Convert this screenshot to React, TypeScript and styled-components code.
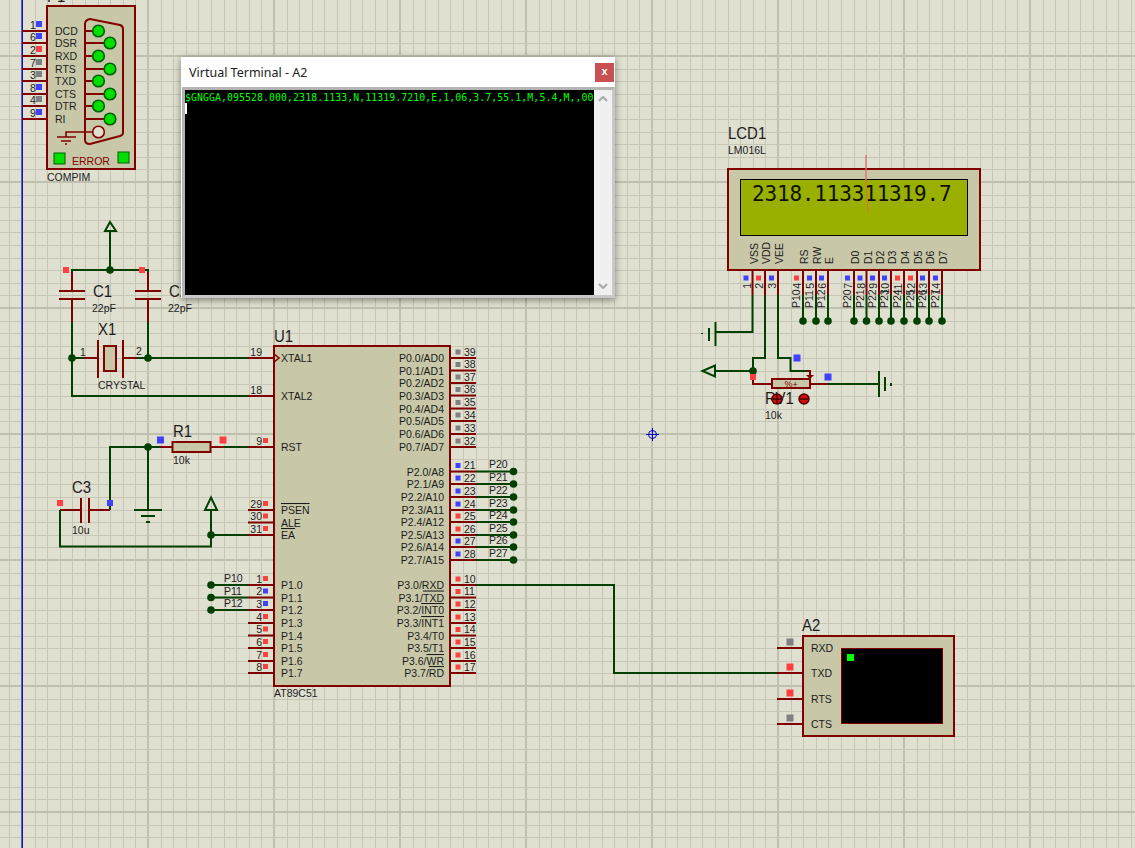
import styled, { createGlobalStyle } from "styled-components";

const RED = "#800000";
const WIRE = "#004000";
const BODY = "#c8c8a8";
const SQ: Record<string, string> = { r: "#ff4040", b: "#4040ff", g: "#808080" };

const GlobalStyle = createGlobalStyle`
  html, body {
    margin: 0;
    padding: 0;
    overflow: hidden;
    background: #e0e0d0;
  }
`;

const Canvas = styled.div`
  position: relative;
  width: 1135px;
  height: 848px;
  overflow: hidden;
  background: #e0e0d0;
`;

const Sheet = styled.svg`
  display: block;
`;

const Label = styled.text<{ $size?: number; $color?: string }>`
  font-family: "Liberation Sans", Arial, sans-serif;
  font-size: ${({ $size }) => $size ?? 10.5}px;
  fill: ${({ $color }) => $color ?? "#1c1c1c"};
`;

const LcdChars = styled.text`
  font-family: "DejaVu Sans Mono", monospace;
  font-size: 21px;
  letter-spacing: -0.18px;
  fill: #101000;
`;

const Bar = styled.tspan`
  text-decoration: overline;
`;

const Terminal = styled.div`
  position: absolute;
  left: 181px;
  top: 57px;
  width: 434px;
  height: 241px;
  display: flex;
  flex-direction: column;
  background: #fff;
  box-shadow: 0 2px 7px rgba(0, 0, 0, 0.45);
`;

const TitleBar = styled.div`
  height: 30px;
  display: flex;
  align-items: center;
  justify-content: space-between;
  padding: 0 1px 0 8px;
  font-family: "Noto Sans", "Liberation Sans", sans-serif;
  font-size: 12.5px;
  color: #222;
`;

const CloseButton = styled.div`
  width: 19px;
  height: 19px;
  background: #c75050;
  color: #fff;
  font-family: "Liberation Sans", sans-serif;
  font-weight: 700;
  font-size: 11px;
  line-height: 17px;
  text-align: center;
`;

const TermFrame = styled.div`
  flex: 1;
  display: flex;
  background: #f0f0f0;
  border-top: 3px solid #b4b4b4;
  border-left: 3px solid #b4b4b4;
  border-right: 3px solid #c8c8c8;
  border-bottom: 3px solid #c8c8c8;
  margin-left: 1px;
  min-height: 0;
`;

const Screen = styled.div`
  flex: 1;
  background: #000;
  padding-top: 1px;
  font-family: "DejaVu Sans Mono", monospace;
  font-size: 9.85px;
  letter-spacing: 0.08px;
  line-height: 13px;
  color: #00ff00;
  white-space: nowrap;
  overflow: hidden;
`;

const Caret = styled.div`
  width: 2px;
  height: 11px;
  margin-top: -1px;
  background: #fff;
`;

const ScrollBar = styled.div`
  width: 18px;
  display: flex;
  flex-direction: column;
  justify-content: space-between;
  align-items: center;
  padding: 6px 0;
  box-sizing: border-box;
`;

const grid = (origin: number, max: number) => {
  const out: { at: number; major: boolean }[] = [];
  for (let k = -2; origin + k * 12.6 < max; k++) {
    out.push({ at: Math.round(origin + k * 12.6), major: k % 10 === 0 });
  }
  return out;
};

function Grid() {
  return (
    <g>
      {grid(22, 1135).map(({ at, major }) => (
        <rect key={`x${at}`} x={at - (major ? 1 : 0)} y={0} width={major ? 2 : 1} height={848} fill={major ? "#c0c0b0" : "#c6c6b7"} />
      ))}
      {grid(56, 848).map(({ at, major }) => (
        <rect key={`y${at}`} x={0} y={at - (major ? 1 : 0)} width={1135} height={major ? 2 : 1} fill={major ? "#c0c0b0" : "#c6c6b7"} />
      ))}
    </g>
  );
}

function Sq({ x, y, c, s = 6 }: { x: number; y: number; c: string; s?: number }) {
  return <rect x={x - s / 2} y={y - s / 2} width={s} height={s} fill={SQ[c]} />;
}

function Wire({ d, red }: { d: string; red?: boolean }) {
  return <path d={d} fill="none" stroke={red ? RED : WIRE} strokeWidth={2} />;
}

function Dot({ x, y }: { x: number; y: number }) {
  return <circle cx={x} cy={y} r={3.8} fill={WIRE} />;
}

// part references are drawn tall and narrow in the original
function RefLabel({ x, y, children }: { x: number; y: number; children: string }) {
  return (
    <Label $size={17} transform={`translate(${x} ${y}) scale(0.88 1)`}>
      {children}
    </Label>
  );
}

const compimPins = [
  ["1", "b", "DCD"],
  ["6", "b", "DSR"],
  ["2", "r", "RXD"],
  ["7", "g", "RTS"],
  ["3", "g", "TXD"],
  ["8", "b", "CTS"],
  ["4", "g", "DTR"],
  ["9", "b", "RI"],
];
const compimY = [31, 43, 56, 69, 81, 94, 106, 119];

function Compim() {
  return (
    <g>
      <rect x={47} y={6} width={88} height={163} fill={BODY} stroke={RED} strokeWidth={2} />
      <RefLabel x={47} y={2}>P1</RefLabel>
      {compimPins.map(([num, c, name], i) => {
        const y = compimY[i];
        const ball = i % 2 === 0 ? 98.5 : 110;
        return (
          <g key={num}>
            <path d={`M22 ${y}H47`} stroke={RED} strokeWidth={2} />
            <Label x={30} y={y - 2.5}>{num}</Label>
            <Sq x={39} y={y - 7} c={c} />
            <Label x={55} y={y + 4}>{name}</Label>
            <path d={`M85 ${y}H${ball}`} stroke={RED} strokeWidth={2} />
            <circle cx={ball} cy={y} r={5.8} fill="#00e000" stroke="#006000" strokeWidth={1.6} />
          </g>
        );
      })}
      <path d="M85 24Q85 20 90 19L120 25Q123 26 123 29V133Q123 135 120 136L90 144Q85 144 85 140Z" fill="none" stroke={RED} strokeWidth={2} />
      <path d="M93 132H66V137M57 137H76M61 141H71M65 144H67" fill="none" stroke={RED} strokeWidth={1.6} />
      <circle cx={98.5} cy={132} r={5.8} fill="#e0e0d0" stroke={RED} strokeWidth={1.6} />
      <rect x={54} y={153} width={11} height={11} fill="#00e000" stroke="#006000" />
      <rect x={118} y={152} width={11} height={11} fill="#00e000" stroke="#006000" />
      <Label x={72} y={165} $color={RED}>ERROR</Label>
      <Label x={47} y={181}>COMPIM</Label>
    </g>
  );
}

const lcdPins = [
  { x: 752.5, name: "VSS", num: "1", c: "b" },
  { x: 765, name: "VDD", num: "2", c: "r" },
  { x: 778, name: "VEE", num: "3", c: "b" },
  { x: 803, name: "RS", num: "4", c: "r", net: "P10" },
  { x: 816, name: "RW", num: "5", c: "b", net: "P11" },
  { x: 828, name: "E", num: "6", c: "b", net: "P12" },
  { x: 854, name: "D0", num: "7", c: "b", net: "P20" },
  { x: 866.5, name: "D1", num: "8", c: "b", net: "P21" },
  { x: 879, name: "D2", num: "9", c: "b", net: "P22" },
  { x: 891, name: "D3", num: "10", c: "b", net: "P23" },
  { x: 904, name: "D4", num: "11", c: "r", net: "P24" },
  { x: 917, name: "D5", num: "12", c: "r", net: "P25" },
  { x: 929, name: "D6", num: "13", c: "b", net: "P26" },
  { x: 942, name: "D7", num: "14", c: "b", net: "P27" },
];

function Lcd() {
  return (
    <g>
      <RefLabel x={728} y={139}>LCD1</RefLabel>
      <Label x={728} y={154}>LM016L</Label>
      <rect x={728} y={169} width={252} height={101} fill={BODY} stroke={RED} strokeWidth={2} />
      <rect x={740.5} y={179.5} width={227} height={56} fill="#99b000" stroke="#000" />
      <LcdChars x={752} y={201}>2318.113311319.7</LcdChars>
      {lcdPins.map((p) => (
        <g key={p.name}>
          <Label x={p.x + 5} y={264} transform={`rotate(-90 ${p.x + 5} 264)`}>{p.name}</Label>
          <path d={`M${p.x} 270V295`} stroke={RED} strokeWidth={2} />
          <Sq x={p.x - 6.5} y={278} c={p.c} s={5} />
          {p.net && <path d={`M${p.x} 295V321`} stroke={WIRE} strokeWidth={2} />}
          {p.net && <Dot x={p.x} y={321} />}
          <Label x={p.x - 2} y={283} textAnchor="start" transform={`rotate(-90 ${p.x - 2} 283) translate(${-p.num.length * 5.8} 0)`}>{p.num}</Label>
          {p.net && (
            <Label x={p.x - 3} y={308} transform={`rotate(-90 ${p.x - 3} 308)`}>{p.net}</Label>
          )}
        </g>
      ))}
      <path d="M866 155V182" stroke="#e07070" strokeWidth={1.4} fill="none" />
      <path d="M866 182L868 213" stroke="#d08030" strokeWidth={1.4} fill="none" />

      <Wire d="M752.5 295V332H716" />
      <path d="M715.5 322V346M709 328V341M702 333V334" stroke={WIRE} strokeWidth={2} fill="none" />
      <Wire d="M765 295V358H753V371H716" />
      <path d="M702.5 371L715 365.5V376.5Z" fill="none" stroke={WIRE} strokeWidth={2} />
      <Dot x={753} y={371} />
      <Wire red d="M753 376V384H772" />
      <Sq x={753} y={377} c="r" />
      <Wire d="M778 295V358H790.5V371H807" />
      <Wire red d="M807 371H810V375" />
      <path d="M806 375H814L810 379Z" fill={RED} />
      <Sq x={797} y={358} c="b" s={7} />
      <rect x={772} y={379} width={38} height={9} fill={BODY} stroke={RED} strokeWidth={2} />
      <Label x={791} y={387} $size={9} $color={RED} textAnchor="middle" transform="rotate(180 791 384)">+%</Label>
      <Wire red d="M810 384H828" />
      <Wire d="M828 384H879" />
      <Sq x={828} y={377} c="b" s={7} />
      <path d="M879 371V397M885 377V391M891 383V386" stroke={WIRE} strokeWidth={2} fill="none" />
      <RefLabel x={765} y={404}>RV1</RefLabel>
      <Label x={765} y={419}>10k</Label>
      <circle cx={777} cy={399} r={5} fill="#d01010" stroke="#500000" strokeWidth={1.5} />
      <path d="M773 399H781M777 395V403" stroke="#400000" strokeWidth={1.4} />
      <circle cx={804} cy={399} r={5} fill="#d01010" stroke="#500000" strokeWidth={1.5} />
      <path d="M800 399H808" stroke="#400000" strokeWidth={1.4} />
    </g>
  );
}

function Cap({ x, label }: { x: number; label: string }) {
  return (
    <g>
      <Wire red d={`M${x} 272V291M${x - 13} 291H${x + 13}M${x - 13} 299H${x + 13}M${x} 299V322`} />
      <Wire d={`M${x} 322V358`} />
      <Sq x={x - 6} y={270} c="r" />
      <RefLabel x={x + 21} y={297}>{label}</RefLabel>
      <Label x={x + 20} y={312}>22pF</Label>
    </g>
  );
}

function Passives() {
  return (
    <g>
      <path d="M110 222L116 231H105Z" fill="none" stroke={WIRE} strokeWidth={2} />
      <Wire d="M110 231V270M71 270H149M72 270V272M148 270V272" />
      <Dot x={110} y={270} />
      <Cap x={72} label="C1" />
      <Cap x={148} label="C2" />

      <Wire d="M72 358H84M137 358H248M72 358V396H248" />
      <Wire red d="M84 358H98M98 340V378M123 340V378M123 358H137M248 358H274M248 396H274" />
      <rect x={104} y={346} width={12} height={25} fill={BODY} stroke={RED} strokeWidth={2} />
      <Dot x={72} y={358} />
      <Dot x={148} y={358} />
      <RefLabel x={98} y={335}>X1</RefLabel>
      <Label x={80} y={356}>1</Label>
      <Label x={136} y={355}>2</Label>
      <Label x={98} y={389}>CRYSTAL</Label>

      <Wire d="M110 510V447H160M224 447H248M148 447V510" />
      <Wire red d="M160 447H172M211 447H224M248 447H274" />
      <rect x={172.5} y={442} width={38} height={10} fill={BODY} stroke={RED} strokeWidth={2} />
      <Dot x={148} y={447} />
      <Sq x={160.5} y={440} c="b" s={7} />
      <Sq x={223} y={440} c="r" s={7} />
      <RefLabel x={173} y={437}>R1</RefLabel>
      <Label x={173} y={464}>10k</Label>
      <path d="M134 510H162M141 516H155M146 522H150" stroke={WIRE} strokeWidth={2} fill="none" />

      <Wire red d="M60 510H81M81 498V523M89 498V523M89 510H110" />
      <Wire d="M60 510V546.5H211V510M211 535H248" />
      <path d="M211 497.5L217 510H205Z" fill="none" stroke={WIRE} strokeWidth={2} />
      <Dot x={211} y={535} />
      <Sq x={60} y={503} c="r" />
      <Sq x={110} y={503} c="b" />
      <RefLabel x={72} y={493}>C3</RefLabel>
      <Label x={72} y={534}>10u</Label>
    </g>
  );
}

const leftPins = [
  { y: 358, n: "19", name: "XTAL1" },
  { y: 396, n: "18", name: "XTAL2" },
  { y: 447, n: "9", c: "r", name: "RST" },
  { y: 510, n: "29", c: "r", name: "PSEN", bar: true },
  { y: 522.5, n: "30", c: "r", name: "ALE" },
  { y: 535, n: "31", c: "r", name: "EA", bar: true },
  { y: 585, n: "1", c: "r", name: "P1.0", net: "P10" },
  { y: 597.5, n: "2", c: "b", name: "P1.1", net: "P11" },
  { y: 610, n: "3", c: "b", name: "P1.2", net: "P12" },
  { y: 623, n: "4", c: "r", name: "P1.3" },
  { y: 635.5, n: "5", c: "r", name: "P1.4" },
  { y: 648, n: "6", c: "r", name: "P1.5" },
  { y: 661, n: "7", c: "r", name: "P1.6" },
  { y: 673, n: "8", c: "r", name: "P1.7" },
];

const p0 = ["P0.0/AD0", "P0.1/AD1", "P0.2/AD2", "P0.3/AD3", "P0.4/AD4", "P0.5/AD5", "P0.6/AD6", "P0.7/AD7"];
const p0Y = [358, 370.5, 383, 395.5, 408.5, 421, 434, 447];
const p2 = ["P2.0/A8", "P2.1/A9", "P2.2/A10", "P2.3/A11", "P2.4/A12", "P2.5/A13", "P2.6/A14", "P2.7/A15"];
const p2Y = [471.5, 484, 497, 510, 522, 535, 547, 560];
const p2Sq = ["b", "b", "b", "b", "r", "r", "b", "b"];
const p3: [string, string][] = [
  ["P3.0/", "RXD"],
  ["P3.1/", "TXD"],
  ["P3.2/", "INT0"],
  ["P3.3/", "INT1"],
  ["P3.4/", "T0"],
  ["P3.5/", "T1"],
  ["P3.6/", "WR"],
  ["P3.7/", "RD"],
];
const p3Y = [585, 597.5, 610, 623, 635.5, 648, 661, 673];
const p3Bar = [false, true, true, true, false, false, true, true];

function Mcu() {
  return (
    <g>
      <RefLabel x={274} y={342}>U1</RefLabel>
      <rect x={274} y={346} width={176} height={340} fill={BODY} stroke={RED} strokeWidth={2} />
      <path d="M274 354L279 358L274 362" fill="none" stroke={RED} strokeWidth={1.6} />
      <Label x={274} y={697}>AT89C51</Label>
      {leftPins.map((p) => (
        <g key={p.n}>
          <path d={`M248 ${p.y}H274`} stroke={RED} strokeWidth={2} />
          <Label x={262} y={p.y - 2.5} textAnchor="end">{p.n}</Label>
          {p.c && <Sq x={265.5} y={p.y - 6.5} c={p.c} s={5} />}
          <Label x={281} y={p.y + 4}>{p.bar ? <Bar>{p.name}</Bar> : p.name}</Label>
          {p.net && <Wire d={`M211 ${p.y}H248`} />}
          {p.net && <Dot x={211} y={p.y} />}
          {p.net && <Label x={224} y={p.y - 3}>{p.net}</Label>}
        </g>
      ))}
      {p0.map((name, i) => (
        <g key={name}>
          <path d={`M450 ${p0Y[i]}H476`} stroke={RED} strokeWidth={2} />
          <Label x={444} y={p0Y[i] + 4} textAnchor="end">{name}</Label>
          <Sq x={458} y={p0Y[i] - 6} c="g" s={5} />
          <Label x={464} y={p0Y[i] - 2.5}>{39 - i}</Label>
        </g>
      ))}
      {p2.map((name, i) => (
        <g key={name}>
          <path d={`M450 ${p2Y[i]}H476`} stroke={RED} strokeWidth={2} />
          <Wire d={`M476 ${p2Y[i]}H513`} />
          <Dot x={513.5} y={p2Y[i]} />
          <Label x={444} y={p2Y[i] + 4} textAnchor="end">{name}</Label>
          <Sq x={458} y={p2Y[i] - 6} c={p2Sq[i]} s={5} />
          <Label x={464} y={p2Y[i] - 2.5}>{21 + i}</Label>
          <Label x={489} y={p2Y[i] - 3.5}>{`P2${i}`}</Label>
        </g>
      ))}
      {p3.map(([head, tail], i) => (
        <g key={head}>
          <path d={`M450 ${p3Y[i]}H476`} stroke={RED} strokeWidth={2} />
          <Label x={444} y={p3Y[i] + 4} textAnchor="end">
            {head}
            {p3Bar[i] ? <Bar>{tail}</Bar> : tail}
          </Label>
          <Sq x={458} y={p3Y[i] - 6} c="r" s={5} />
          <Label x={464} y={p3Y[i] - 2.5}>{10 + i}</Label>
        </g>
      ))}
      <Wire d="M476 585H614V673H777" />
    </g>
  );
}

const termPins: [string, string, number][] = [
  ["RXD", "g", 648],
  ["TXD", "r", 673],
  ["RTS", "r", 699],
  ["CTS", "g", 724],
];

function TerminalPart() {
  return (
    <g>
      <RefLabel x={802} y={631}>A2</RefLabel>
      <rect x={803} y={636} width={151} height={100} fill={BODY} stroke={RED} strokeWidth={2} />
      <rect x={841.5} y={648.5} width={101} height={75} fill="#000" stroke={RED} />
      <rect x={847} y={654} width={7} height={7} fill="#00ff00" />
      {termPins.map(([name, c, y]) => (
        <g key={name}>
          <path d={`M777 ${y}H803`} stroke={RED} strokeWidth={2} />
          <Sq x={790} y={y - 6} c={c} s={7} />
          <Label x={811} y={y + 4}>{name}</Label>
        </g>
      ))}
    </g>
  );
}

export default function App() {
  return (
    <Canvas>
      <GlobalStyle />
      <Sheet width={1135} height={848} viewBox="0 0 1135 848">
        <Grid />
        <rect x={21.5} y={0} width={1.4} height={848} fill="#0000c0" />
        <Compim />
        <Lcd />
        <Passives />
        <Mcu />
        <TerminalPart />
        <g stroke="#0000c0" fill="none">
          <circle cx={652.5} cy={434.5} r={4} />
          <path d="M652.5 428V441M646 434.5H659" />
        </g>
      </Sheet>
      <Terminal>
        <TitleBar>
          Virtual Terminal - A2
          <CloseButton>x</CloseButton>
        </TitleBar>
        <TermFrame>
          <Screen>
            $GNGGA,095528.000,2318.1133,N,11319.7210,E,1,06,3.7,55.1,M,5.4,M,,00
            <Caret />
          </Screen>
          <ScrollBar>
            <svg width="10" height="6" viewBox="0 0 10 6">
              <path d="M1 5L5 1L9 5" fill="none" stroke="#a8a8a8" strokeWidth="2" />
            </svg>
            <svg width="10" height="6" viewBox="0 0 10 6">
              <path d="M1 1L5 5L9 1" fill="none" stroke="#a8a8a8" strokeWidth="2" />
            </svg>
          </ScrollBar>
        </TermFrame>
      </Terminal>
    </Canvas>
  );
}
